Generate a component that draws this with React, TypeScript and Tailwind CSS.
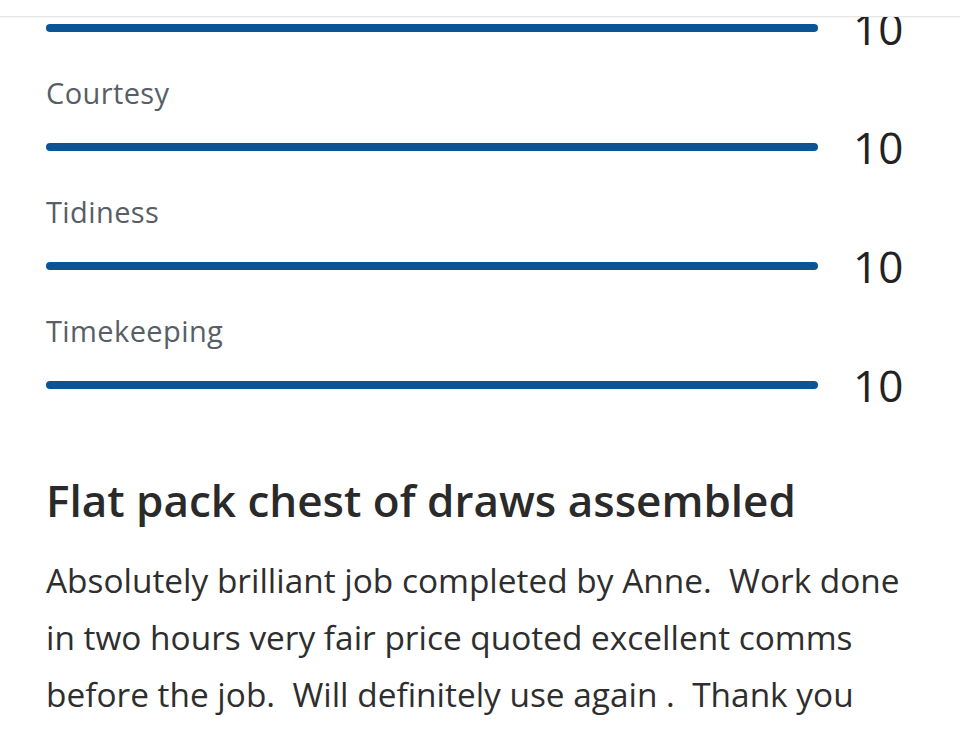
import React from 'react';

const RATINGS = [
  { label: '', score: 10 },
  { label: 'Courtesy', score: 10 },
  { label: 'Tidiness', score: 10 },
  { label: 'Timekeeping', score: 10 },
];

const REVIEW_LINES = [
  'Absolutely brilliant job completed by Anne.  Work done',
  'in two hours very fair price quoted excellent comms',
  'before the job.  Will definitely use again .  Thank you',
];

const ScoreBar = ({ score }: { score: number }) => (
  <div className="flex h-[60px] items-center">
    <div className="h-[8px] flex-1 rounded-full bg-[#0b5597]" />
    <span className="ml-[35px] w-[51px] text-[44px] leading-[60px] text-[#222222]">{score}</span>
  </div>
);

const App: React.FC = () => {
  return (
    <div className="relative h-[743px] overflow-hidden bg-white font-['Open_Sans',sans-serif]">
      <div className="absolute inset-x-0 top-0 z-10 h-[17px] border-b border-[#e6e6e6] bg-white shadow-[0_1px_2px_rgba(0,0,0,0.04)]" />

      <div className="-mt-[2px] pl-[46px] pr-[56px]">
        {RATINGS.map((r, i) => (
          <div key={i}>
            {r.label && (
              <p className="pt-[17px] text-[29px] font-medium leading-[36px] tracking-[0.4px] text-[#575e66]">{r.label}</p>
            )}
            <div className={r.label ? 'mt-[6px]' : ''}>
              <ScoreBar score={r.score} />
            </div>
          </div>
        ))}
      </div>

      <div className="pl-[46px] pr-[18px]">
        <h2 className="mt-[57px] text-[44px] font-semibold leading-[56px] text-[#2a2a2a]">
          Flat pack chest of draws assembled
        </h2>
        <p className="mt-[24px] whitespace-pre text-[33.4px] leading-[57px] text-[#2e2e2e]">
          {REVIEW_LINES.map((line, i) => (
            <span key={i} className="block">{line}</span>
          ))}
        </p>
      </div>
    </div>
  );
};

export default App;
